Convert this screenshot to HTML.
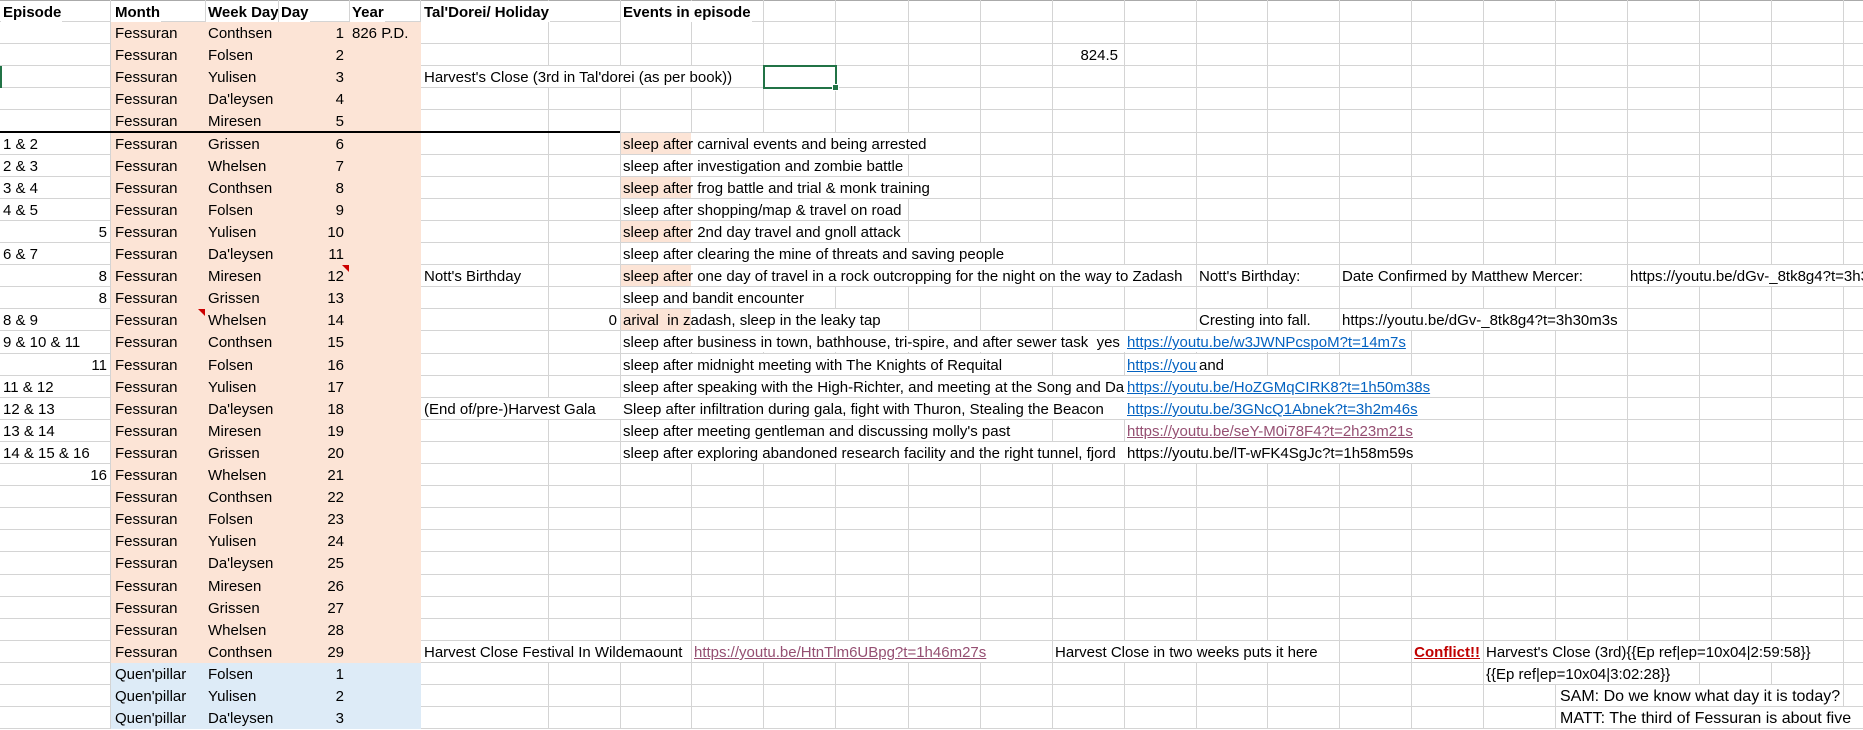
<!DOCTYPE html>
<html><head><meta charset="utf-8"><style>
html,body{margin:0;padding:0;}
body{width:1863px;height:729px;position:relative;overflow:hidden;background:#fff;font-family:"Liberation Sans",Arial,sans-serif;font-size:15px;color:#000;}
.t{position:absolute;height:21px;line-height:23px;white-space:nowrap;}
.w{background:#fff;padding-right:1px;}
.p{background:linear-gradient(to right,#fce4d6 0,#fce4d6 69px,#fff 69px);}
.r{text-align:right;}
.b{font-weight:bold;}
.c{overflow:hidden;}
.f{position:absolute;}
.lk{color:#0563c1;text-decoration:underline;}
.pu{color:#954f72;text-decoration:underline;}
</style></head><body>
<svg class="f" style="left:0;top:0" width="1863" height="729">
<g stroke="#d4d4d4" stroke-width="1">
<line x1="0" y1="0.5" x2="1863" y2="0.5" stroke="#aaa"/>
<line x1="110.5" y1="0" x2="110.5" y2="729"/><line x1="205.5" y1="0" x2="205.5" y2="729"/><line x1="278.5" y1="0" x2="278.5" y2="729"/><line x1="349.5" y1="0" x2="349.5" y2="729"/><line x1="420.5" y1="0" x2="420.5" y2="729"/><line x1="548.5" y1="0" x2="548.5" y2="729"/><line x1="620.5" y1="0" x2="620.5" y2="729"/><line x1="691.5" y1="0" x2="691.5" y2="729"/><line x1="763.5" y1="0" x2="763.5" y2="729"/><line x1="835.5" y1="0" x2="835.5" y2="729"/><line x1="908.5" y1="0" x2="908.5" y2="729"/><line x1="980.5" y1="0" x2="980.5" y2="729"/><line x1="1052.5" y1="0" x2="1052.5" y2="729"/><line x1="1124.5" y1="0" x2="1124.5" y2="729"/><line x1="1196.5" y1="0" x2="1196.5" y2="729"/><line x1="1267.5" y1="0" x2="1267.5" y2="729"/><line x1="1339.5" y1="0" x2="1339.5" y2="729"/><line x1="1411.5" y1="0" x2="1411.5" y2="729"/><line x1="1483.5" y1="0" x2="1483.5" y2="729"/><line x1="1555.5" y1="0" x2="1555.5" y2="729"/><line x1="1627.5" y1="0" x2="1627.5" y2="729"/><line x1="1699.5" y1="0" x2="1699.5" y2="729"/><line x1="1771.5" y1="0" x2="1771.5" y2="729"/><line x1="1843.5" y1="0" x2="1843.5" y2="729"/>
<line x1="0" y1="21.5" x2="1863" y2="21.5"/><line x1="0" y1="43.5" x2="1863" y2="43.5"/><line x1="0" y1="65.5" x2="1863" y2="65.5"/><line x1="0" y1="87.5" x2="1863" y2="87.5"/><line x1="0" y1="109.5" x2="1863" y2="109.5"/><line x1="0" y1="132.5" x2="1863" y2="132.5"/><line x1="0" y1="154.5" x2="1863" y2="154.5"/><line x1="0" y1="176.5" x2="1863" y2="176.5"/><line x1="0" y1="198.5" x2="1863" y2="198.5"/><line x1="0" y1="220.5" x2="1863" y2="220.5"/><line x1="0" y1="242.5" x2="1863" y2="242.5"/><line x1="0" y1="264.5" x2="1863" y2="264.5"/><line x1="0" y1="286.5" x2="1863" y2="286.5"/><line x1="0" y1="308.5" x2="1863" y2="308.5"/><line x1="0" y1="330.5" x2="1863" y2="330.5"/><line x1="0" y1="353.5" x2="1863" y2="353.5"/><line x1="0" y1="375.5" x2="1863" y2="375.5"/><line x1="0" y1="397.5" x2="1863" y2="397.5"/><line x1="0" y1="419.5" x2="1863" y2="419.5"/><line x1="0" y1="441.5" x2="1863" y2="441.5"/><line x1="0" y1="463.5" x2="1863" y2="463.5"/><line x1="0" y1="485.5" x2="1863" y2="485.5"/><line x1="0" y1="507.5" x2="1863" y2="507.5"/><line x1="0" y1="529.5" x2="1863" y2="529.5"/><line x1="0" y1="551.5" x2="1863" y2="551.5"/><line x1="0" y1="574.5" x2="1863" y2="574.5"/><line x1="0" y1="596.5" x2="1863" y2="596.5"/><line x1="0" y1="618.5" x2="1863" y2="618.5"/><line x1="0" y1="640.5" x2="1863" y2="640.5"/><line x1="0" y1="662.5" x2="1863" y2="662.5"/><line x1="0" y1="684.5" x2="1863" y2="684.5"/><line x1="0" y1="706.5" x2="1863" y2="706.5"/><line x1="0" y1="728.5" x2="1863" y2="728.5"/>
</g></svg>
<div class="f" style="left:111px;top:22px;width:310px;height:641px;background:#fce4d6"></div>
<div class="f" style="left:111px;top:663px;width:310px;height:66px;background:#ddebf7"></div>
<div class="f" style="left:621px;top:133px;width:70px;height:21px;background:#fce4d6"></div>
<div class="f" style="left:621px;top:177px;width:70px;height:21px;background:#fce4d6"></div>
<div class="f" style="left:621px;top:221px;width:70px;height:21px;background:#fce4d6"></div>

<div class="t b w" style="left:1px;top:1px;padding-left:2px">Episode</div>
<div class="t b w" style="left:111px;top:1px;padding-left:4px">Month</div>
<div class="t b w c" style="left:206px;top:1px;width:72px;padding-left:2px;box-sizing:border-box">Week Day</div>
<div class="t b w" style="left:279px;top:1px;padding-left:2px">Day</div>
<div class="t b w" style="left:350px;top:1px;padding-left:2px">Year</div>
<div class="t b w" style="left:421px;top:1px;padding-left:3px">Tal'Dorei/ Holiday</div>
<div class="t b w" style="left:621px;top:1px;padding-left:2px">Events in episode</div>

<div class="t" style="left:115px;top:22px">Fessuran</div><div class="t" style="left:208px;top:22px">Conthsen</div><div class="t r" style="left:279px;width:65px;top:22px">1</div><div class="t" style="left:352px;top:22px">826 P.D.</div>
<div class="t" style="left:115px;top:44px">Fessuran</div><div class="t" style="left:208px;top:44px">Folsen</div><div class="t r" style="left:279px;width:65px;top:44px">2</div>
<div class="t" style="left:115px;top:66px">Fessuran</div><div class="t" style="left:208px;top:66px">Yulisen</div><div class="t r" style="left:279px;width:65px;top:66px">3</div>
<div class="t" style="left:115px;top:88px">Fessuran</div><div class="t" style="left:208px;top:88px">Da'leysen</div><div class="t r" style="left:279px;width:65px;top:88px">4</div>
<div class="t" style="left:115px;top:110px">Fessuran</div><div class="t" style="left:208px;top:110px">Miresen</div><div class="t r" style="left:279px;width:65px;top:110px">5</div>
<div class="t" style="left:115px;top:133px">Fessuran</div><div class="t" style="left:208px;top:133px">Grissen</div><div class="t r" style="left:279px;width:65px;top:133px">6</div>
<div class="t" style="left:115px;top:155px">Fessuran</div><div class="t" style="left:208px;top:155px">Whelsen</div><div class="t r" style="left:279px;width:65px;top:155px">7</div>
<div class="t" style="left:115px;top:177px">Fessuran</div><div class="t" style="left:208px;top:177px">Conthsen</div><div class="t r" style="left:279px;width:65px;top:177px">8</div>
<div class="t" style="left:115px;top:199px">Fessuran</div><div class="t" style="left:208px;top:199px">Folsen</div><div class="t r" style="left:279px;width:65px;top:199px">9</div>
<div class="t" style="left:115px;top:221px">Fessuran</div><div class="t" style="left:208px;top:221px">Yulisen</div><div class="t r" style="left:279px;width:65px;top:221px">10</div>
<div class="t" style="left:115px;top:243px">Fessuran</div><div class="t" style="left:208px;top:243px">Da'leysen</div><div class="t r" style="left:279px;width:65px;top:243px">11</div>
<div class="t" style="left:115px;top:265px">Fessuran</div><div class="t" style="left:208px;top:265px">Miresen</div><div class="t r" style="left:279px;width:65px;top:265px">12</div>
<div class="t" style="left:115px;top:287px">Fessuran</div><div class="t" style="left:208px;top:287px">Grissen</div><div class="t r" style="left:279px;width:65px;top:287px">13</div>
<div class="t" style="left:115px;top:309px">Fessuran</div><div class="t" style="left:208px;top:309px">Whelsen</div><div class="t r" style="left:279px;width:65px;top:309px">14</div>
<div class="t" style="left:115px;top:331px">Fessuran</div><div class="t" style="left:208px;top:331px">Conthsen</div><div class="t r" style="left:279px;width:65px;top:331px">15</div>
<div class="t" style="left:115px;top:354px">Fessuran</div><div class="t" style="left:208px;top:354px">Folsen</div><div class="t r" style="left:279px;width:65px;top:354px">16</div>
<div class="t" style="left:115px;top:376px">Fessuran</div><div class="t" style="left:208px;top:376px">Yulisen</div><div class="t r" style="left:279px;width:65px;top:376px">17</div>
<div class="t" style="left:115px;top:398px">Fessuran</div><div class="t" style="left:208px;top:398px">Da'leysen</div><div class="t r" style="left:279px;width:65px;top:398px">18</div>
<div class="t" style="left:115px;top:420px">Fessuran</div><div class="t" style="left:208px;top:420px">Miresen</div><div class="t r" style="left:279px;width:65px;top:420px">19</div>
<div class="t" style="left:115px;top:442px">Fessuran</div><div class="t" style="left:208px;top:442px">Grissen</div><div class="t r" style="left:279px;width:65px;top:442px">20</div>
<div class="t" style="left:115px;top:464px">Fessuran</div><div class="t" style="left:208px;top:464px">Whelsen</div><div class="t r" style="left:279px;width:65px;top:464px">21</div>
<div class="t" style="left:115px;top:486px">Fessuran</div><div class="t" style="left:208px;top:486px">Conthsen</div><div class="t r" style="left:279px;width:65px;top:486px">22</div>
<div class="t" style="left:115px;top:508px">Fessuran</div><div class="t" style="left:208px;top:508px">Folsen</div><div class="t r" style="left:279px;width:65px;top:508px">23</div>
<div class="t" style="left:115px;top:530px">Fessuran</div><div class="t" style="left:208px;top:530px">Yulisen</div><div class="t r" style="left:279px;width:65px;top:530px">24</div>
<div class="t" style="left:115px;top:552px">Fessuran</div><div class="t" style="left:208px;top:552px">Da'leysen</div><div class="t r" style="left:279px;width:65px;top:552px">25</div>
<div class="t" style="left:115px;top:575px">Fessuran</div><div class="t" style="left:208px;top:575px">Miresen</div><div class="t r" style="left:279px;width:65px;top:575px">26</div>
<div class="t" style="left:115px;top:597px">Fessuran</div><div class="t" style="left:208px;top:597px">Grissen</div><div class="t r" style="left:279px;width:65px;top:597px">27</div>
<div class="t" style="left:115px;top:619px">Fessuran</div><div class="t" style="left:208px;top:619px">Whelsen</div><div class="t r" style="left:279px;width:65px;top:619px">28</div>
<div class="t" style="left:115px;top:641px">Fessuran</div><div class="t" style="left:208px;top:641px">Conthsen</div><div class="t r" style="left:279px;width:65px;top:641px">29</div>
<div class="t" style="left:115px;top:663px">Quen'pillar</div><div class="t" style="left:208px;top:663px">Folsen</div><div class="t r" style="left:279px;width:65px;top:663px">1</div>
<div class="t" style="left:115px;top:685px">Quen'pillar</div><div class="t" style="left:208px;top:685px">Yulisen</div><div class="t r" style="left:279px;width:65px;top:685px">2</div>
<div class="t" style="left:115px;top:707px">Quen'pillar</div><div class="t" style="left:208px;top:707px">Da'leysen</div><div class="t r" style="left:279px;width:65px;top:707px">3</div>

<div class="t" style="left:3px;top:133px">1 &amp; 2</div>
<div class="t" style="left:3px;top:155px">2 &amp; 3</div>
<div class="t" style="left:3px;top:177px">3 &amp; 4</div>
<div class="t" style="left:3px;top:199px">4 &amp; 5</div>
<div class="t r" style="left:0;width:107px;top:221px">5</div>
<div class="t" style="left:3px;top:243px">6 &amp; 7</div>
<div class="t r" style="left:0;width:107px;top:265px">8</div>
<div class="t r" style="left:0;width:107px;top:287px">8</div>
<div class="t" style="left:3px;top:309px">8 &amp; 9</div>
<div class="t" style="left:3px;top:331px">9 &amp; 10 &amp; 11</div>
<div class="t r" style="left:0;width:107px;top:354px">11</div>
<div class="t" style="left:3px;top:376px">11 &amp; 12</div>
<div class="t" style="left:3px;top:398px">12 &amp; 13</div>
<div class="t" style="left:3px;top:420px">13 &amp; 14</div>
<div class="t" style="left:3px;top:442px">14 &amp; 15 &amp; 16</div>
<div class="t r" style="left:0;width:107px;top:464px">16</div>

<div class="t r" style="left:1052px;width:66px;top:44px">824.5</div>
<div class="t w" style="left:421px;top:66px;padding-left:3px">Harvest's Close (3rd in Tal'dorei (as per book))</div>
<div class="t w" style="left:421px;top:265px;padding-left:3px">Nott's Birthday</div>
<div class="t c w" style="left:421px;width:196px;top:398px;padding-left:3px">(End of/pre-)Harvest Gala</div>
<div class="t w" style="left:421px;top:641px;padding-left:3px">Harvest Close Festival In Wildemaount</div>
<div class="t r" style="left:560px;width:57px;top:309px">0</div>

<div class="t w" style="left:621px;top:133px;padding-left:2px;background:linear-gradient(to right,#fce4d6 0,#fce4d6 70px,#fff 70px)">sleep after carnival events and being arrested</div>
<div class="t w" style="left:621px;top:155px;padding-left:2px">sleep after investigation and zombie battle</div>
<div class="t w" style="left:621px;top:177px;padding-left:2px;background:linear-gradient(to right,#fce4d6 0,#fce4d6 70px,#fff 70px)">sleep after frog battle and trial &amp; monk training</div>
<div class="t w" style="left:621px;top:199px;padding-left:2px">sleep after shopping/map &amp; travel on road</div>
<div class="t w" style="left:621px;top:221px;padding-left:2px;background:linear-gradient(to right,#fce4d6 0,#fce4d6 70px,#fff 70px)">sleep after 2nd day travel and gnoll attack</div>
<div class="t w" style="left:621px;top:243px;padding-left:2px">sleep after clearing the mine of threats and saving people</div>
<div class="t c" style="left:621px;width:573px;top:265px;padding-left:2px;background:linear-gradient(to right,#fce4d6 0,#fce4d6 70px,#fff 70px)">sleep after one day of travel in a rock outcropping for the night on the way to Zadash</div>
<div class="t w" style="left:621px;top:287px;padding-left:2px">sleep and bandit encounter</div>
<div class="t" style="left:621px;top:309px;padding-left:2px;background:linear-gradient(to right,#fce4d6 0,#fce4d6 70px,#fff 70px)">arival &nbsp;in zadash, sleep in the leaky tap</div>
<div class="t c w" style="left:621px;width:501px;top:331px;padding-left:2px">sleep after business in town, bathhouse, tri-spire, and after sewer task &nbsp;yes</div>
<div class="t w" style="left:621px;top:354px;padding-left:2px">sleep after midnight meeting with The Knights of Requital</div>
<div class="t c w" style="left:621px;width:501px;top:376px;padding-left:2px">sleep after speaking with the High-Richter, and meeting at the Song and Dance</div>
<div class="t c w" style="left:621px;width:501px;top:398px;padding-left:2px">Sleep after infiltration during gala, fight with Thuron, Stealing the Beacon</div>
<div class="t w" style="left:621px;top:420px;padding-left:2px">sleep after meeting gentleman and discussing molly's past</div>
<div class="t c w" style="left:621px;width:501px;top:442px;padding-left:2px">sleep after exploring abandoned research facility and the right tunnel, fjord</div>

<div class="t w" style="left:1197px;top:265px;padding-left:2px">Nott's Birthday:</div>
<div class="t w" style="left:1340px;top:265px;padding-left:2px">Date Confirmed by Matthew Mercer:</div>
<div class="t c w" style="left:1628px;width:235px;top:265px;padding-left:2px">https://youtu.be/dGv-_8tk8g4?t=3h30m3s</div>
<div class="t w" style="left:1197px;top:309px;padding-left:2px">Cresting into fall.</div>
<div class="t w" style="left:1340px;top:309px;padding-left:2px">https://youtu.be/dGv-_8tk8g4?t=3h30m3s</div>
<div class="t w" style="left:1125px;top:331px;padding-left:2px"><span class="lk">https://youtu.be/w3JWNPcspoM?t=14m7s</span></div>
<div class="t c w" style="left:1125px;width:69px;top:354px;padding-left:2px"><span class="lk">https://youtu.be/w3JWNPcspoM?t=14m7s</span></div>
<div class="t w" style="left:1197px;top:354px;padding-left:2px">and</div>
<div class="t w" style="left:1125px;top:376px;padding-left:2px"><span class="lk">https://youtu.be/HoZGMqCIRK8?t=1h50m38s</span></div>
<div class="t w" style="left:1125px;top:398px;padding-left:2px"><span class="lk">https://youtu.be/3GNcQ1Abnek?t=3h2m46s</span></div>
<div class="t w" style="left:1125px;top:420px;padding-left:2px"><span class="pu">https://youtu.be/seY-M0i78F4?t=2h23m21s</span></div>
<div class="t w" style="left:1125px;top:442px;padding-left:2px">https://youtu.be/lT-wFK4SgJc?t=1h58m59s</div>

<div class="t w" style="left:692px;top:641px;padding-left:2px"><span class="pu">https://youtu.be/HtnTlm6UBpg?t=1h46m27s</span></div>
<div class="t w" style="left:1053px;top:641px;padding-left:2px">Harvest Close in two weeks puts it here</div>
<div class="t r b" style="left:1411px;width:69px;top:641px;color:#c00000;"><u>Conflict!!</u></div>
<div class="t w" style="left:1484px;top:641px;padding-left:2px">Harvest's Close (3rd){{Ep ref|ep=10x04|2:59:58}}</div>
<div class="t w" style="left:1484px;top:663px;padding-left:2px">{{Ep ref|ep=10x04|3:02:28}}</div>
<div class="t w" style="left:1558px;top:685px;padding-left:2px;font-size:16px">SAM: Do we know what day it is today?</div>
<div class="t w" style="left:1558px;top:707px;padding-left:2px;font-size:16px">MATT: The third of Fessuran is about five</div>

<div class="f" style="left:0;top:131px;width:620px;height:2px;background:#000"></div>
<div class="f" style="left:763px;top:65px;width:70px;height:20px;border:2px solid #217346"></div>
<div class="f" style="left:832px;top:84px;width:5px;height:5px;background:#217346;border:1px solid #fff"></div>
<div class="f" style="left:0;top:66px;width:2px;height:22px;background:#217346"></div>
<svg class="f" style="left:342px;top:265px" width="7" height="7"><polygon points="0,0 7,0 7,7" fill="#c00"/></svg>
<svg class="f" style="left:198px;top:309px" width="7" height="7"><polygon points="0,0 7,0 7,7" fill="#c00"/></svg>
</body></html>
